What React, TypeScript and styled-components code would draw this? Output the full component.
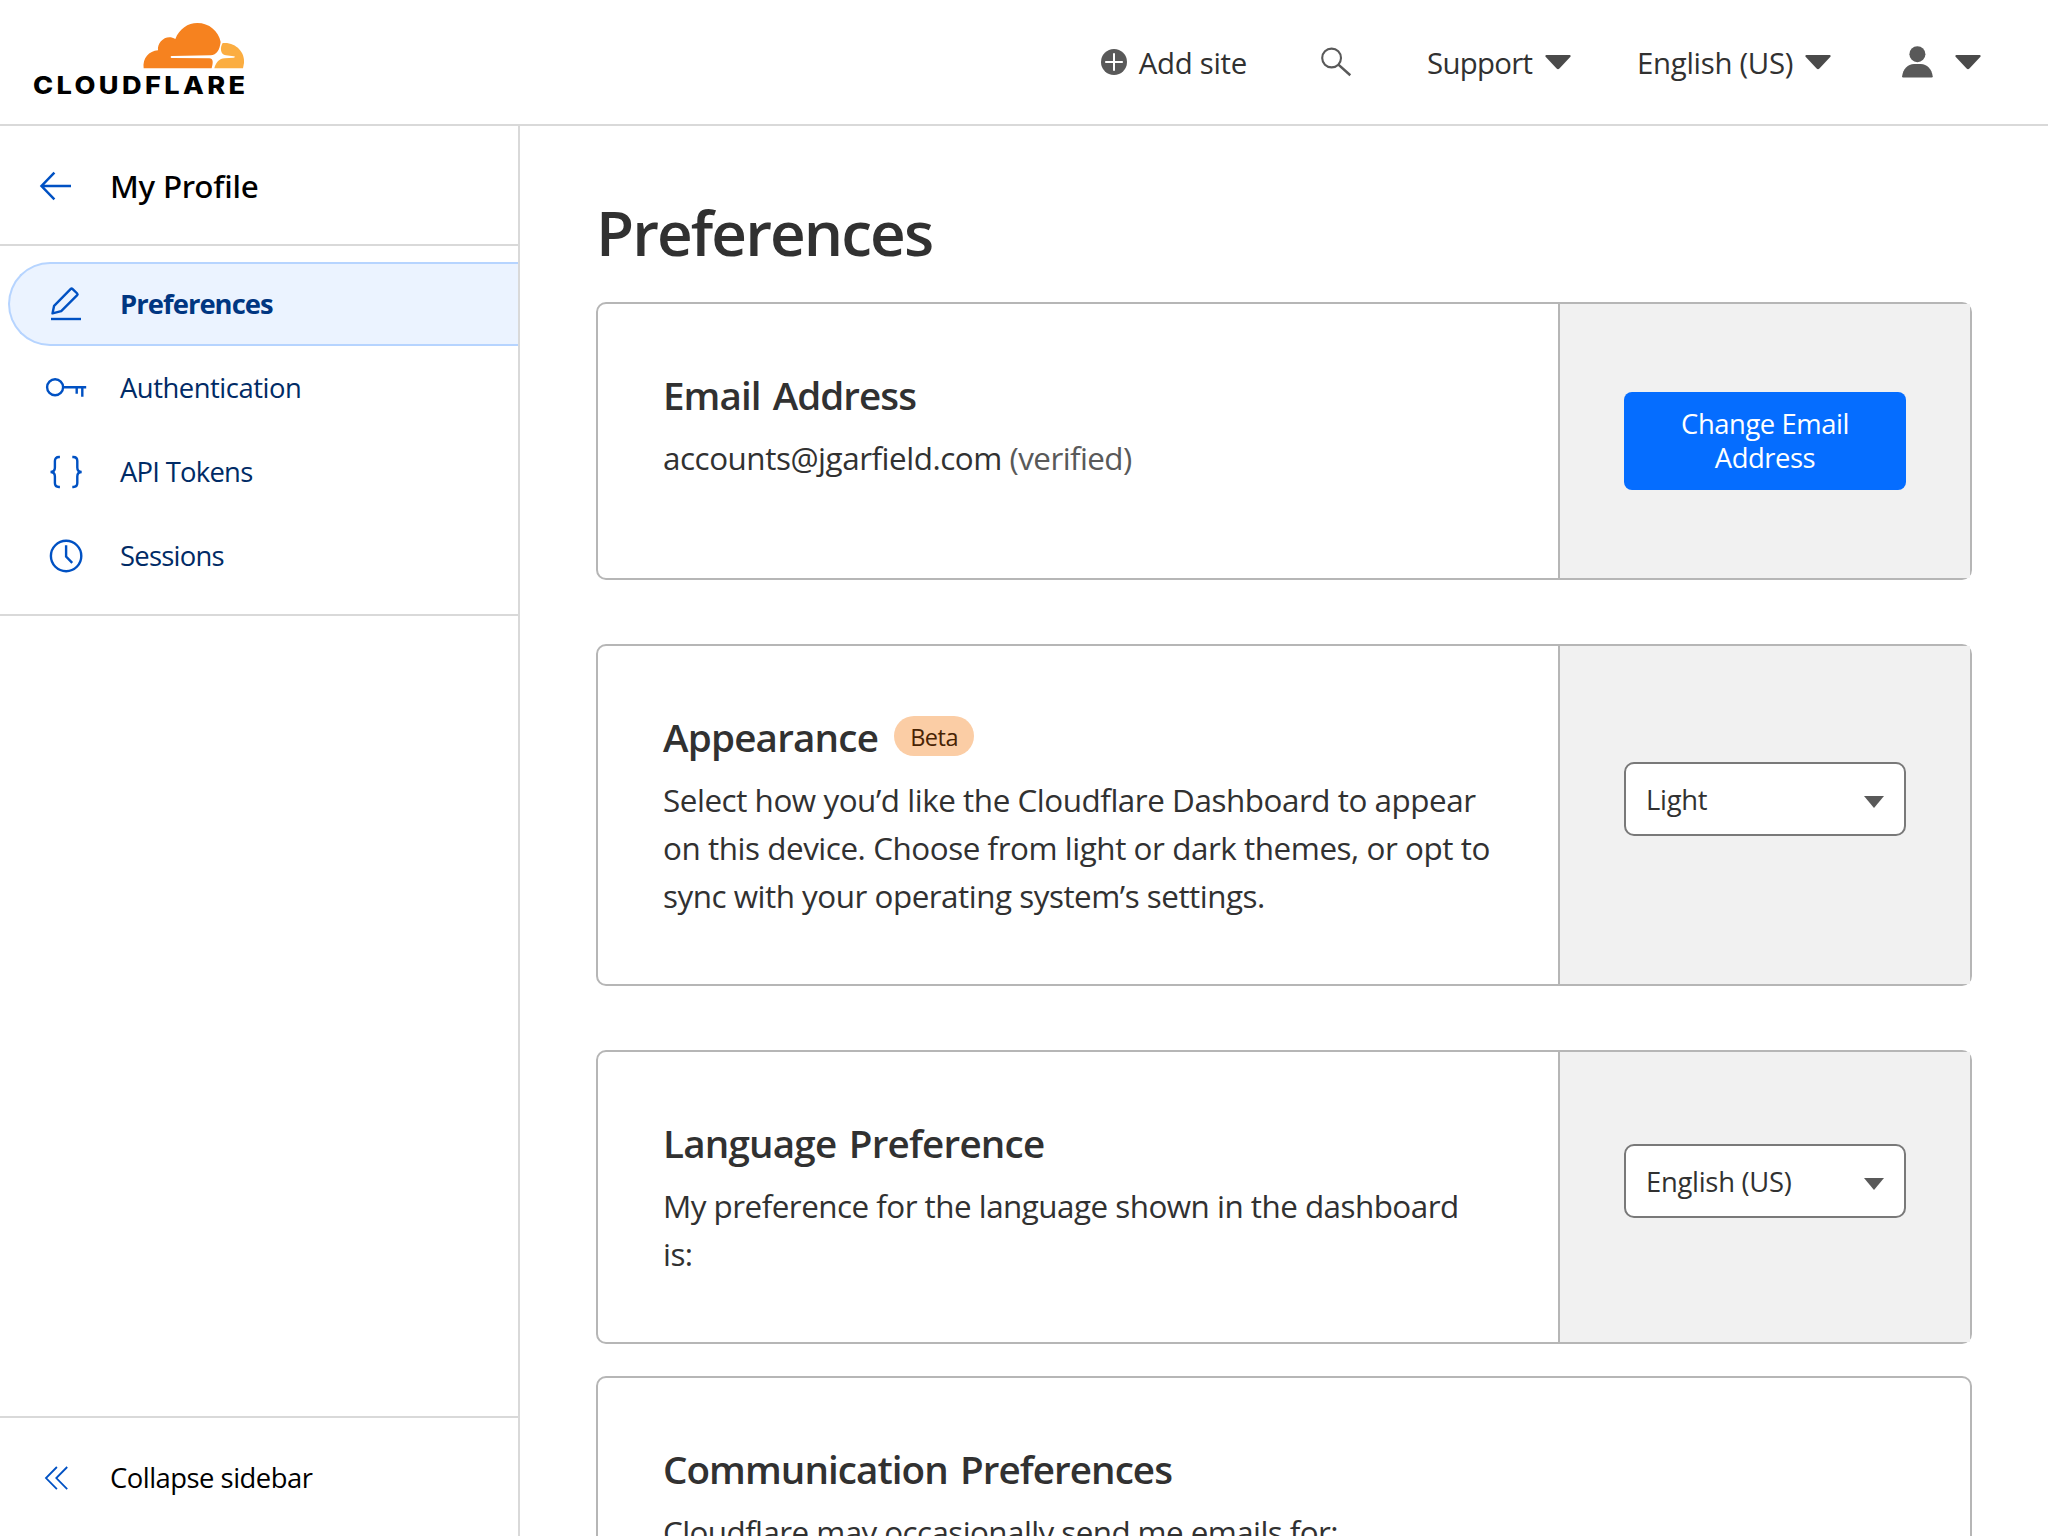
import React from 'react';
import styled, { createGlobalStyle } from 'styled-components';

const GlobalStyle = createGlobalStyle`
  *, *::before, *::after { box-sizing: border-box; }
  body {
    margin: 0;
    background: #fff;
    color: #313131;
    font-family: 'Open Sans', 'Noto Sans', sans-serif;
    overflow: hidden;
  }
  svg { display: block; flex: none; overflow: visible; }
`;

const colors = {
  rule: '#d9d9d9',
  cardBorder: '#b6b6b6',
  panel: '#f1f1f1',
  icon: '#595959',
  caret: '#4a4a4a',
  blue: '#0051c3',
  navy: '#003681',
  darkNavy: '#002b66',
};

/* ---------- layout ---------- */

const Page = styled.div`
  display: flex;
  flex-direction: column;
  height: 1536px;
  overflow: hidden;
`;

const Header = styled.header`
  display: flex;
  align-items: center;
  justify-content: space-between;
  flex: none;
  height: 126px;
  padding-right: 67px;
  border-bottom: 2px solid ${colors.rule};
`;

const Body = styled.div`
  display: flex;
  flex: 1;
  min-height: 0;
`;

const HeaderNav = styled.nav`
  display: flex;
  align-items: center;
  height: 100%;
`;

const HeaderItem = styled.div<{ $width: number; $after?: number }>`
  display: flex;
  align-items: center;
  justify-content: space-between;
  width: ${p => p.$width}px;
  height: 100%;
  margin-right: ${p => p.$after ?? 0}px;
`;

const HeaderLabel = styled.span<{ $track: number }>`
  font-size: 29.4px;
  letter-spacing: ${p => p.$track}em;
  line-height: 40px;
  padding-top: 1px;
  white-space: nowrap;
`;

/* ---------- sidebar ---------- */

const Sidebar = styled.aside`
  display: flex;
  flex-direction: column;
  flex: none;
  width: 520px;
  border-right: 2px solid ${colors.rule};
`;

const SidebarHeader = styled.div`
  display: flex;
  align-items: center;
  height: 120px;
  padding: 2px 0 0 40px;
  border-bottom: 2px solid ${colors.rule};
`;

const SidebarTitle = styled.div`
  margin-left: 39px;
  color: #000;
  font-family: 'Noto Sans', sans-serif;
  font-size: 31.4px;
  font-weight: 500;
  letter-spacing: -0.0067em;
  line-height: 44px;
`;

const NavList = styled.ul`
  margin: 0;
  padding: 16px 0;
  list-style: none;
  border-bottom: 2px solid ${colors.rule};
`;

const NavItem = styled.li<{ $active?: boolean }>`
  display: flex;
  align-items: center;
  gap: 34px;
  height: 84px;
  margin-left: 8px;
  padding-left: 36px;
  border: 2px solid ${p => (p.$active ? '#b6d4ff' : 'transparent')};
  border-right: 0;
  border-radius: 42px 0 0 42px;
  background: ${p => (p.$active ? '#ebf3ff' : 'transparent')};
  color: ${p => (p.$active ? colors.navy : colors.darkNavy)};
  font-weight: ${p => (p.$active ? 700 : 400)};
`;

const NavLabel = styled.span<{ $track: number }>`
  font-size: 27.4px;
  letter-spacing: ${p => p.$track}em;
  line-height: 40px;
`;

const CollapseBar = styled.div`
  display: flex;
  align-items: center;
  height: 120px;
  margin-top: auto;
  padding: 2px 0 0 44px;
  border-top: 2px solid ${colors.rule};
`;

const CollapseLabel = styled.span`
  margin-left: 42px;
  color: #000;
  font-size: 27.4px;
  letter-spacing: -0.0181em;
  line-height: 40px;
`;

/* ---------- main ---------- */

const Main = styled.main`
  flex: 1;
  min-width: 0;
  padding: 66px 76px 0;
`;

const PageTitle = styled.h1`
  margin: 0 0 30px;
  font-size: 62px;
  font-weight: 600;
  letter-spacing: -0.031em;
  line-height: 80px;
`;

const Card = styled.section<{ $after?: number; $minHeight?: number }>`
  display: flex;
  min-height: ${p => p.$minHeight ?? 0}px;
  margin-bottom: ${p => p.$after ?? 64}px;
  border: 2px solid ${colors.cardBorder};
  border-radius: 10px;
`;

const CardText = styled.div`
  flex: 1;
  min-width: 0;
  padding: 64px 64px 64px 65px;
`;

const CardTitle = styled.h2<{ $track: number }>`
  display: flex;
  align-items: center;
  margin: 0 0 12px;
  font-size: 38.6px;
  font-weight: 600;
  letter-spacing: ${p => p.$track}em;
  word-spacing: 0.08em;
  line-height: 54px;
  white-space: nowrap;
`;

const CardLine = styled.div<{ $track: number }>`
  font-size: 31.4px;
  letter-spacing: ${p => p.$track}em;
  line-height: 48px;
  white-space: nowrap;
`;

const Muted = styled.span`
  color: ${colors.icon};
  letter-spacing: -0.0188em;
`;

const Badge = styled.span`
  display: inline-flex;
  align-items: center;
  justify-content: center;
  width: 80px;
  height: 40px;
  margin: 0 0 2px 16px;
  padding-top: 1px;
  border-radius: 20px;
  background: #fbcda5;
  color: #482303;
  font-size: 23.5px;
  font-weight: 400;
  letter-spacing: -0.0219em;
  line-height: 32px;
`;

const CardAction = styled.div<{ $lift?: boolean }>`
  display: flex;
  align-items: center;
  flex: none;
  width: 412px;
  padding: 0 64px ${p => (p.$lift ? 32 : 0)}px;
  border-left: 2px solid ${colors.cardBorder};
  background: ${colors.panel};
`;

const PrimaryButton = styled.button`
  width: 100%;
  height: 98px;
  padding: 0;
  border: 0;
  border-radius: 8px;
  background: #056dff;
  color: #fff;
  font-family: inherit;
  font-size: 27.4px;
  letter-spacing: -0.016em;
  line-height: 34px;
`;

const SelectBox = styled.div`
  display: flex;
  align-items: center;
  justify-content: space-between;
  width: 100%;
  height: 74px;
  padding: 0 20px;
  border: 2px solid #797979;
  border-radius: 10px;
  background: #fff;
  font-size: 27.4px;
  letter-spacing: -0.01em;
  line-height: 40px;
`;

const SelectValue = styled.span`
  padding-top: 2px;
`;

const SelectArrowBox = styled.span`
  padding-top: 6px;
`;

/* ---------- icons ---------- */

const Logo = () => (
  <svg width="280" height="124" viewBox="0 0 280 124" role="img" aria-label="Cloudflare">
    <g transform="scale(.33333)">
      <path
        fill="#f6821f"
        d="M431 205C427 175 447 153 474 151C471 126 499 101 526 117C538 86 564 69 592 69C627 69 656 93 662 126C659 150 650 165 632 166L515 168Q512 168 512 171Q512 174 515 174L628 175C640 176 640 187 635 205Z"
      />
      <path
        fill="#fbad41"
        d="M668 129C706 125 736 156 732 189L729 205H643C648 187 658 176 674 175L701 173Q705 172 705 171Q705 169 701 169L678 166C660 164 660 141 668 129Z"
      />
    </g>
    <text
      x="33"
      y="93.6"
      fill="#000"
      fontFamily="Inter, sans-serif"
      fontSize="24"
      fontWeight="800"
      letterSpacing="3"
      textLength="215.4"
      lengthAdjust="spacingAndGlyphs"
    >
      CLOUDFLARE
    </text>
  </svg>
);

const PlusCircle = () => (
  <svg width="26" height="26" viewBox="0 0 26 26">
    <circle cx="13" cy="13" r="13" fill={colors.icon} />
    <path d="M13 4.2v17.6M4.2 13h17.6" stroke="#fff" strokeWidth="2" />
  </svg>
);

const SearchIcon = () => (
  <svg width="30" height="30" viewBox="0 0 30 30" fill="none" stroke={colors.icon} strokeWidth="2.1">
    <circle cx="10.6" cy="11" r="9.4" />
    <path d="M17.4 17.6L29.3 28.3" strokeWidth="2.5" />
  </svg>
);

const HeaderCaret = () => (
  <svg width="26" height="15" viewBox="0 0 26 15">
    <path
      fill={colors.caret}
      d="M1.2 0H24.8Q26.4 .5 25.4 1.8L14.4 13.6Q13 15 11.6 13.6L.6 1.8Q-.4 .5 1.2 0Z"
    />
  </svg>
);

const PersonIcon = () => (
  <svg width="31" height="32" viewBox="0 0 31 32" fill={colors.icon}>
    <circle cx="15.4" cy="8.2" r="8" />
    <path d="M1.2 31.6Q0 31.6 .1 30.2C1 23.2 5.8 18 12 18H18.8C25 18 29.8 23.2 30.7 30.2Q30.8 31.6 29.6 31.6Z" />
  </svg>
);

const BackArrow = () => (
  <svg width="31" height="30" viewBox="0 0 31 30" fill="none" stroke={colors.blue} strokeWidth="2.5">
    <path d="M14.4 1.6L1.5 15L14.4 28.4M1.5 15H31" />
  </svg>
);

const CollapseIcon = () => (
  <svg width="24" height="24" viewBox="0 0 24 24" fill="none" stroke={colors.blue} strokeWidth="1.8">
    <path d="M12.9 1L2 12.1L12.9 23.2M23.2 1L12.3 12.1L23.2 23.2" />
  </svg>
);

const NavSvg = ({ children }: { children: React.ReactNode }) => (
  <svg width="40" height="40" viewBox="0 0 40 40" fill="none" stroke={colors.blue} strokeWidth="2.4">
    {children}
  </svg>
);

const PencilIcon = () => (
  <NavSvg>
    <path
      d="M24.8 4.9Q25.6 4.1 26.4 4.9L31.2 9.5Q32 10.3 31.2 11.1L15.2 27.2L6.5 29.4L8.1 21.8Z"
      strokeLinejoin="round"
    />
    <path d="M5 35H35" />
  </NavSvg>
);

const KeyIcon = () => (
  <NavSvg>
    <circle cx="9.1" cy="19.2" r="8" />
    <path d="M17.1 19.2H40.2M30.7 19.2V25.8M36.3 19.2V28.8" />
  </NavSvg>
);

const BracesIcon = () => (
  <NavSvg>
    <path d="M13.9 5H13C10.2 5 8.9 6.3 8.9 9V15.5C8.9 18.5 7.6 20 4.5 20C7.6 20 8.9 21.5 8.9 24.5V31C8.9 33.7 10.2 35 13 35H13.9" />
    <path d="M26.3 5H27.2C30 5 31.3 6.3 31.3 9V15.5C31.3 18.5 32.6 20 35.7 20C32.6 20 31.3 21.5 31.3 24.5V31C31.3 33.7 30 35 27.2 35H26.3" />
  </NavSvg>
);

const ClockIcon = () => (
  <NavSvg>
    <circle cx="20.1" cy="20" r="15.2" />
    <path d="M20.1 9.3V20.6L26.2 26.9" />
  </NavSvg>
);

const SelectArrow = () => (
  <SelectArrowBox>
    <svg width="20" height="12" viewBox="0 0 20 12">
      <path fill={colors.icon} d="M0 0H20L10 12Z" />
    </svg>
  </SelectArrowBox>
);

/* ---------- data ---------- */

const navItems = [
  { label: 'Preferences', track: -0.0345, icon: <PencilIcon />, active: true },
  { label: 'Authentication', track: -0.0172, icon: <KeyIcon /> },
  { label: 'API Tokens', track: -0.0264, icon: <BracesIcon /> },
  { label: 'Sessions', track: -0.0265, icon: <ClockIcon /> },
];

const Select = ({ value }: { value: string }) => (
  <SelectBox role="combobox">
    <SelectValue>{value}</SelectValue>
    <SelectArrow />
  </SelectBox>
);

export default function App() {
  return (
    <Page>
      <GlobalStyle />
      <Header>
        <Logo />
        <HeaderNav>
          <HeaderItem $width={146} $after={74}>
            <PlusCircle />
            <HeaderLabel $track={-0.0095}>Add site</HeaderLabel>
          </HeaderItem>
          <HeaderItem $width={30} $after={76}>
            <SearchIcon />
          </HeaderItem>
          <HeaderItem $width={144} $after={66}>
            <HeaderLabel $track={-0.024}>Support</HeaderLabel>
            <HeaderCaret />
          </HeaderItem>
          <HeaderItem $width={194} $after={71}>
            <HeaderLabel $track={-0.01}>English (US)</HeaderLabel>
            <HeaderCaret />
          </HeaderItem>
          <HeaderItem $width={79}>
            <PersonIcon />
            <HeaderCaret />
          </HeaderItem>
        </HeaderNav>
      </Header>
      <Body>
        <Sidebar>
          <SidebarHeader>
            <BackArrow />
            <SidebarTitle>My Profile</SidebarTitle>
          </SidebarHeader>
          <NavList>
            {navItems.map(item => (
              <NavItem key={item.label} $active={item.active}>
                {item.icon}
                <NavLabel $track={item.track}>{item.label}</NavLabel>
              </NavItem>
            ))}
          </NavList>
          <CollapseBar>
            <CollapseIcon />
            <CollapseLabel>Collapse sidebar</CollapseLabel>
          </CollapseBar>
        </Sidebar>
        <Main>
          <PageTitle>Preferences</PageTitle>
          <Card $minHeight={278}>
            <CardText>
              <CardTitle $track={-0.0245}>Email Address</CardTitle>
              <CardLine $track={-0.0145}>
                accounts@jgarfield.com <Muted>(verified)</Muted>
              </CardLine>
            </CardText>
            <CardAction>
              <PrimaryButton>
                Change Email
                <br />
                Address
              </PrimaryButton>
            </CardAction>
          </Card>
          <Card>
            <CardText>
              <CardTitle $track={-0.0207}>
                Appearance<Badge>Beta</Badge>
              </CardTitle>
              <CardLine $track={-0.0144}>Select how you’d like the Cloudflare Dashboard to appear</CardLine>
              <CardLine $track={-0.0142}>on this device. Choose from light or dark themes, or opt to</CardLine>
              <CardLine $track={-0.0155}>sync with your operating system’s settings.</CardLine>
            </CardText>
            <CardAction $lift>
              <Select value="Light" />
            </CardAction>
          </Card>
          <Card $after={32}>
            <CardText>
              <CardTitle $track={-0.0205}>Language Preference</CardTitle>
              <CardLine $track={-0.0165}>My preference for the language shown in the dashboard</CardLine>
              <CardLine $track={-0.0165}>is:</CardLine>
            </CardText>
            <CardAction $lift>
              <Select value="English (US)" />
            </CardAction>
          </Card>
          <Card $minHeight={400}>
            <CardText>
              <CardTitle $track={-0.0243}>Communication Preferences</CardTitle>
              <CardLine $track={-0.0185}>Cloudflare may occasionally send me emails for:</CardLine>
            </CardText>
          </Card>
        </Main>
      </Body>
    </Page>
  );
}
